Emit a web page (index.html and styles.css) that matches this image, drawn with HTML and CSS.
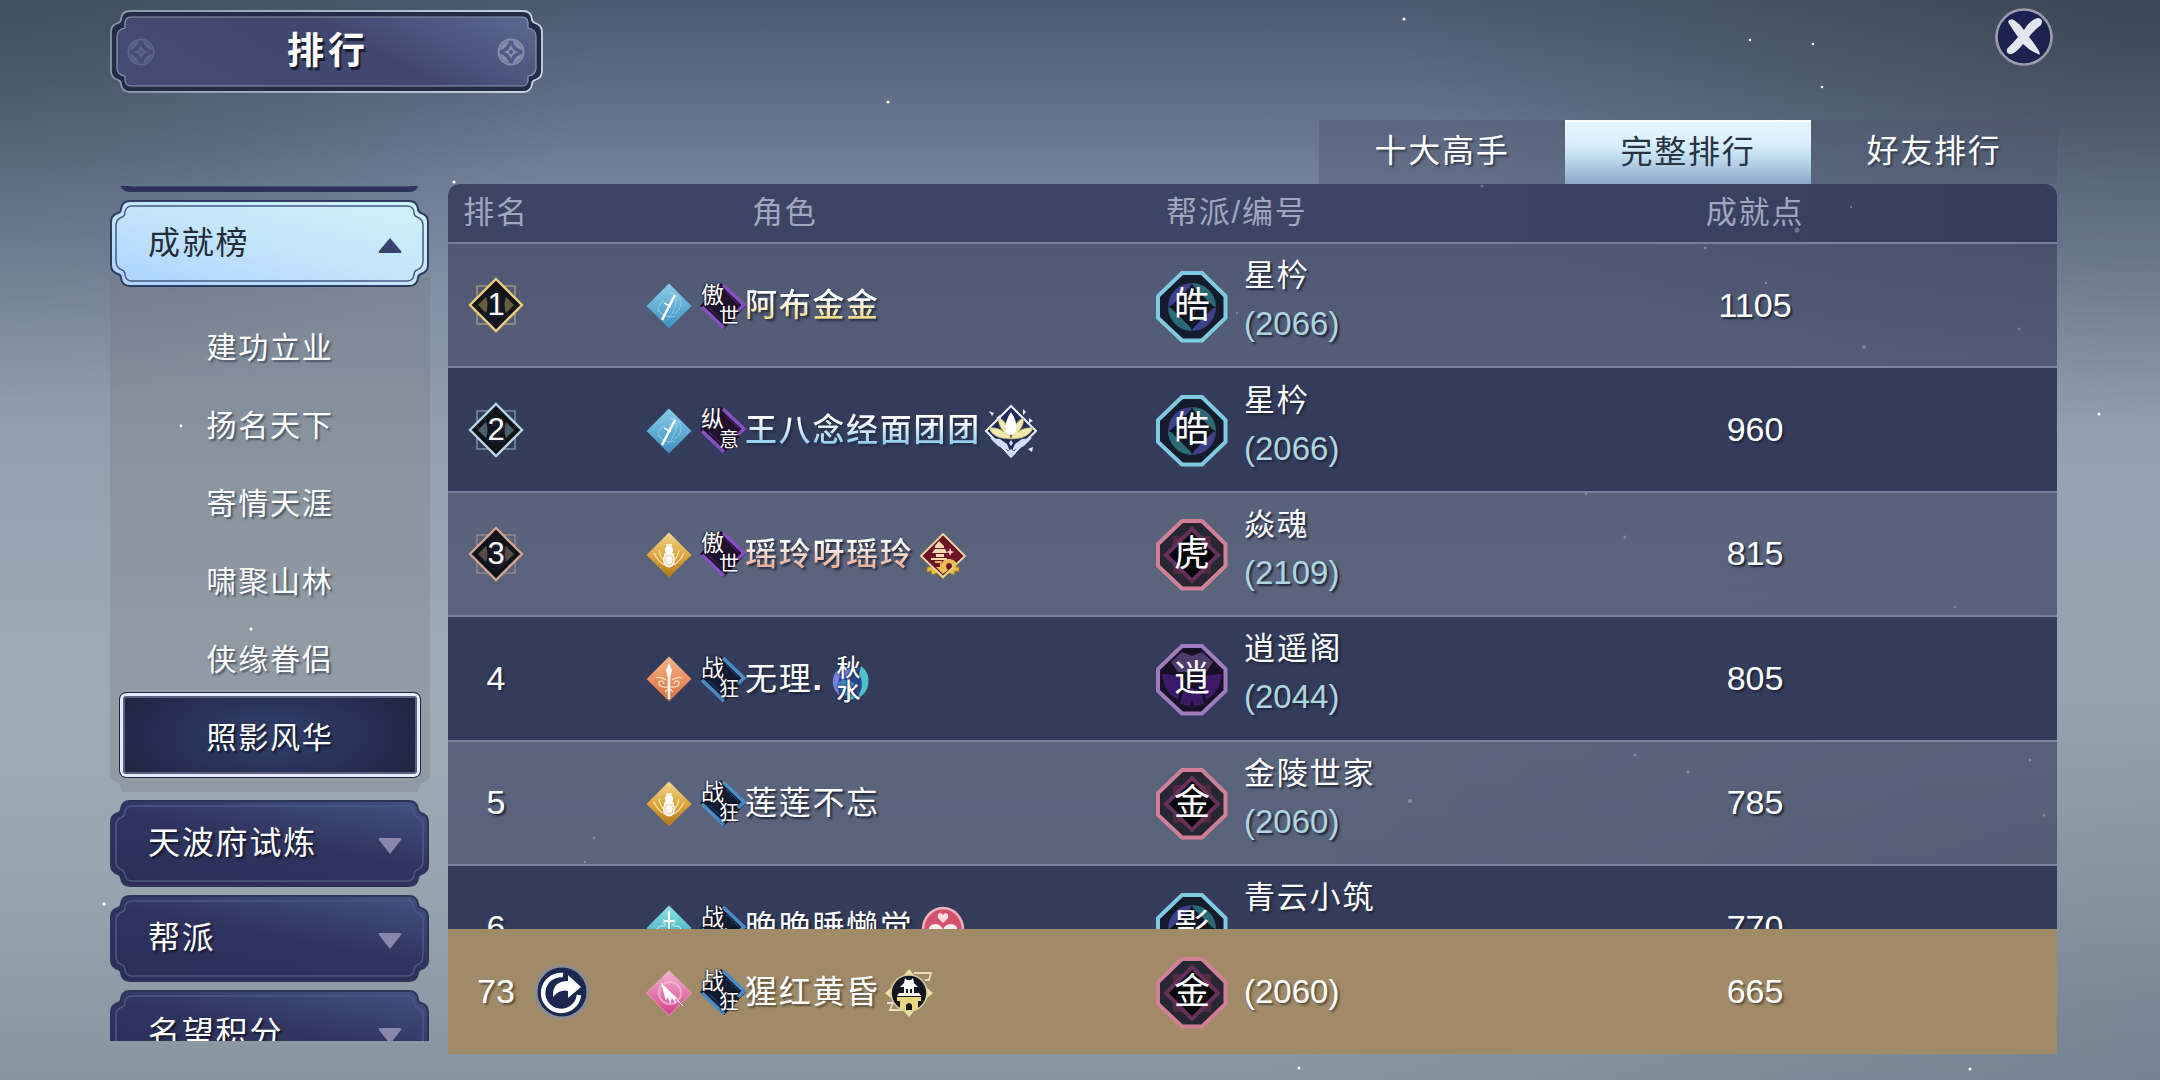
FILE: index.html
```html
<!DOCTYPE html>
<html lang="zh-CN">
<head>
  <meta charset="UTF-8" />
  <meta name="viewport" content="width=device-width, initial-scale=1.0"/>
  <title>排行</title>
  <link rel="stylesheet" href="styles.css">
</head>
<body>

  <!-- 图标定义 -->
  <svg class="defs" width="0" height="0">
    <defs>
      <linearGradient id="g-light" x1="0" y1="1" x2="1" y2="0"><stop offset="0" stop-color="#acd2ff"/><stop offset="0.5" stop-color="#c3e6fb"/><stop offset="1" stop-color="#d0f3f8"/></linearGradient>
      <linearGradient id="g-dark" x1="0.2" y1="1" x2="0.9" y2="0"><stop offset="0" stop-color="#2c2e58"/><stop offset="0.5" stop-color="#2f345e"/><stop offset="1" stop-color="#40507f"/></linearGradient>
      <linearGradient id="g-title" x1="0" y1="0.3" x2="1" y2="0"><stop offset="0" stop-color="#444b73"/><stop offset="0.5" stop-color="#40476f"/><stop offset="1" stop-color="#5b6991"/></linearGradient>
      <linearGradient id="g-rim" x1="0" y1="0" x2="1" y2="0"><stop offset="0" stop-color="#8796aa"/><stop offset="1" stop-color="#c3d5e3"/></linearGradient>
      <linearGradient id="g-blue" x1="0" y1="0" x2="0" y2="1"><stop offset="0" stop-color="#8bcdea"/><stop offset="1" stop-color="#3d8fc0"/></linearGradient>
      <linearGradient id="g-gold" x1="0" y1="0" x2="0" y2="1"><stop offset="0" stop-color="#f3d78e"/><stop offset="0.55" stop-color="#dba23b"/><stop offset="1" stop-color="#b47517"/></linearGradient>
      <linearGradient id="g-orange" x1="0" y1="0" x2="0" y2="1"><stop offset="0" stop-color="#f6b58c"/><stop offset="1" stop-color="#dc6b3d"/></linearGradient>
      <linearGradient id="g-teal" x1="0" y1="0" x2="0" y2="1"><stop offset="0" stop-color="#8ee5ea"/><stop offset="1" stop-color="#2c97ae"/></linearGradient>
      <linearGradient id="g-pink" x1="0" y1="0" x2="0" y2="1"><stop offset="0" stop-color="#f4b3d2"/><stop offset="1" stop-color="#d33f8c"/></linearGradient>
    </defs>

    <symbol id="plate" viewBox="0 0 319 87">
      <path d="M1 22Q1 15 8 13Q11 12 11 9Q12 1 20 1H299Q307 1 308 9Q308 12 311 13Q318 15 318 22V65Q318 72 311 74Q308 75 308 78Q307 86 299 86H20Q12 86 11 78Q11 75 8 74Q1 72 1 65Z" class="plate-bg"/>
      <path d="M6 26Q6 19 12 17Q15 16 15 12Q16 6 22 6H297Q303 6 304 12Q304 16 307 17Q313 19 313 26V61Q313 68 307 70Q304 71 304 75Q303 81 297 81H22Q16 81 15 75Q15 71 12 70Q6 68 6 61Z" class="plate-line"/>
    </symbol>

    <symbol id="coin" viewBox="0 0 28 28">
      <circle cx="14" cy="14" r="12.500" fill="none" stroke="currentColor" stroke-width="2"/>
      <path d="M4 11Q9 9 11 4A11 11 0 0 0 4 11ZM24 11Q19 9 17 4A11 11 0 0 1 24 11ZM4 17Q9 19 11 24A11 11 0 0 1 4 17ZM24 17Q19 19 17 24A11 11 0 0 0 24 17Z" fill="currentColor" stroke="currentColor" stroke-width="1.500"/>
      <path d="M14 6Q15 13 22 14Q15 15 14 22Q13 15 6 14Q13 13 14 6Z" fill="currentColor"/>
      <circle cx="14" cy="14" r="2" fill="#4c5580"/>
    </symbol>

    <symbol id="medal" viewBox="0 0 56 56">
      <rect x="9" y="9" width="38" height="38" fill="none" stroke="currentColor" stroke-opacity="0.6" stroke-width="1.3"/>
      <path d="M28 2L54 28L28 54L2 28Z" fill="#12151c" stroke="currentColor" stroke-width="2.4"/>
      <path d="M10 28L18 20Q21 28 18 36ZM46 28L38 20Q35 28 38 36Z" fill="currentColor" opacity="0.38"/>
      <path d="M28 6L50 28L28 50L6 28Z" fill="none" stroke="#000" stroke-opacity="0.5"/>
    </symbol>

    <!-- 门派 -->
    <symbol id="cls-flute" viewBox="0 0 46 46">
      <path d="M23 .5L45.500 23L23 45.500L.5 23Z" fill="url(#g-blue)"/>
      <path d="M24 10Q34 10 35 20Q35 27 28 31M18 18Q8 24 16 31M30 13Q32 24 22 36M11 27Q20 36 29 33" fill="none" stroke="#b9e4f7" stroke-opacity="0.5"/>
      <path d="M29 12L16 37" stroke="#fff" stroke-width="2.600"/>
      <path d="M18 20L23 22L26 17L24 24Z" fill="#fff" stroke="#fff"/>
    </symbol>
    <symbol id="cls-gourd" viewBox="0 0 46 46">
      <path d="M23 .5L45.500 23L23 45.500L.5 23Z" fill="url(#g-gold)"/>
      <path d="M8 21Q13 31 19 33M38 21Q33 31 27 33M13 18Q14 25 18 28M33 18Q32 25 28 28" fill="none" stroke="#fbe7ae" stroke-width="1.300"/>
      <circle cx="23" cy="18" r="4" fill="#fff"/>
      <ellipse cx="23" cy="28" rx="6" ry="7.500" fill="#fff"/>
      <ellipse cx="23" cy="28" rx="4" ry="5" fill="none" stroke="#d99e38" stroke-width="0.700"/>
      <path d="M18 22h10M20 13h6" stroke="#fff" stroke-width="1.500"/>
    </symbol>
    <symbol id="cls-spear" viewBox="0 0 46 46">
      <path d="M23 .5L45.500 23L23 45.500L.5 23Z" fill="url(#g-orange)"/>
      <path d="M23 7L26 14L24.300 21V43H21.700V21L20 14Z" fill="#fff"/>
      <path d="M22 31Q12 32 13 26Q17 23 18 28M24 31Q34 32 33 26Q29 23 28 28M20 24Q14 20 10 22M26 24Q32 20 36 22M19 36L22 33M27 36L24 33" fill="none" stroke="#ffe2bf" stroke-width="1.200"/>
    </symbol>
    <symbol id="cls-sword" viewBox="0 0 46 46">
      <path d="M23 .5L45.500 23L23 45.500L.5 23Z" fill="url(#g-teal)"/>
      <path d="M23 6V40M18 16H28" stroke="#fff" stroke-width="2"/>
      <path d="M19 21Q9 20 12 27M27 21Q37 20 34 27M18 14Q15 18 20 20M28 14Q31 18 26 20" fill="none" stroke="#c9f5f7"/>
    </symbol>
    <symbol id="cls-fan" viewBox="0 0 46 46">
      <path d="M23 .5L45.500 23L23 45.500L.5 23Z" fill="url(#g-pink)" stroke="#f2a4cb" stroke-width="0.800"/>
      <circle cx="24" cy="23" r="11" fill="none" stroke="#f7bfdc" stroke-opacity="0.700" stroke-width="2"/>
      <path d="M15 13L20 31L22 27L24 34L26 28L30 34L29 28L32 29Z" fill="#fff"/>
      <path d="M15 13L37 36" stroke="#fff"/>
    </symbol>

    <symbol id="tag" viewBox="0 0 46 46">
      <path d="M21 0L46 23L24 46L0 23Z" fill="var(--tag-bg)"/>
      <path d="M23 2L44 22L38 28M2 24L24 45" fill="none" stroke="var(--tag-line)" stroke-width="3.600"/>
      <path d="M26 9L38 21M9 25L24 39" stroke="var(--tag-line)" stroke-opacity="0.4"/>
    </symbol>

    <!-- 帮派徽记 -->
    <symbol id="guild-a" viewBox="0 0 72 72">
      <path d="M26 2H46L69.500 25V47L46 69.500H26L2 47V25Z" fill="#141b2a" stroke="#7ecbe0" stroke-width="4"/>
      <circle cx="36" cy="36" r="24" fill="#11192a"/>
      <path d="M12 36A24 24 0 0 1 36 12Q30 29 12 36Z M60 36A24 24 0 0 1 36 60Q42 43 60 36Z" fill="#3d418b"/>
      <path d="M36 12A24 24 0 0 1 60 36Q43 30 36 12Z M36 60A24 24 0 0 1 12 36Q29 42 36 60Z" fill="#2b6a74"/>
      <path d="M36 14L58 36L36 58L14 36Z" fill="#111522"/>
    </symbol>
    <symbol id="guild-b" viewBox="0 0 72 72">
      <path d="M26 2H46L69.500 25V47L46 69.500H26L2 47V25Z" fill="#272633" stroke="#d17f96" stroke-width="4"/>
      <rect x="17" y="17" width="38" height="38" fill="#4e2940"/>
      <path d="M36 10L62 36L36 62L10 36Z" fill="#08070c" stroke="#67305b" stroke-width="4"/>
    </symbol>
    <symbol id="guild-c" viewBox="0 0 72 72">
      <path d="M26 2H46L69.500 25V47L46 69.500H26L2 47V25Z" fill="#181026" stroke="#a07bbd" stroke-width="4"/>
      <path d="M26 8L36 12L46 8L57 18L50 28H22L15 18Z" fill="#4f3b6b"/>
      <path d="M6 30L26 32L22 56L14 50Q8 44 6 30ZM66 30L46 32L50 56L58 50Q64 44 66 30ZM27 48L36 44L45 48L48 60L38 62L36 56L34 62L24 60Z" fill="#3d1a67"/>
    </symbol>

    <!-- 称号徽章 -->
    <symbol id="badge-lotus" viewBox="0 0 56 56">
      <path d="M28 3L53 28L28 53L3 28Z" fill="#1e2a58" stroke="#f4f6ff" stroke-width="2"/>
      <path d="M28 36Q10 36 6 25Q15 24 21 29Q14 21 16 15Q23 18 25 26L28 36L31 26Q33 18 40 15Q42 21 35 29Q41 24 50 25Q46 36 28 36Z" fill="#f1e9ad" stroke="#b8a95b" stroke-width="0.700"/>
      <path d="M28 9Q36 21 32 30Q28 34 24 30Q20 21 28 9Z" fill="#fff"/>
      <path d="M7 35L17 36L24 41L15 43ZM49 35L39 36L32 41L41 43ZM15 43L24 41L27 48ZM41 43L32 41L29 48ZM28 37L30 40L28 43L26 40ZM28 46L33 50L28 55L23 50Z" fill="#cfdcfb"/>
      <path d="M6 8L11 10L9 13ZM13 15L17 12L18 16ZM40 6L43 9L40 12ZM46 15L50 18L46 20ZM45 46L50 44L49 49Z" fill="#e8efff"/>
    </symbol>
    <symbol id="badge-palace" viewBox="0 0 48 48">
      <path d="M8 35H40V40L36 39L35 43L30 41L24 47L18 41L13 43L12 39L8 40Z" fill="#e5ba3f" stroke="#a5781c" stroke-width="0.800"/>
      <path d="M24 2L46 24L24 45L2 24Z" fill="#6e1428" stroke="#f0d7a0" stroke-width="1.800"/>
      <path d="M20 9L25 14V16H16V14ZM16 17H26L28 21H13ZM17 22H25V25H17ZM12 26H28V28H12Z" fill="#f3dcae"/>
      <path d="M22 33Q24 26 31 27Q39 28 37 35H33Q33 31 30 31Q27 31 27 35L29 38L24 42L17 35H21V31H16V29H23Z" fill="#e8bd55"/>
      <path d="M31 16l1.500 3 3 1-3 1-1.500 3-1-3-3-1 3-1Z" fill="#f7c6c3"/>
    </symbol>
    <symbol id="badge-water" viewBox="0 0 40 48">
      <circle cx="20" cy="25" r="16" fill="#28488b"/>
      <path d="M6 14A18 18 0 0 0 9 40Q4 26 12 16ZM8 20Q16 10 26 14Q17 15 12 26Z" fill="#7481dc"/>
      <path d="M30 10A19 19 0 0 1 25 43Q35 30 28 19ZM12 34Q20 28 25 42L19 44Z" fill="#4cc3cc"/>
      <path d="M5 28Q15 20 24 28L14 40Z" fill="#3c86bd"/>
    </symbol>
    <symbol id="badge-heart" viewBox="0 0 44 48">
      <ellipse cx="22" cy="24" rx="20" ry="22" fill="#d3536f" stroke="#f1aebb" stroke-width="2.500"/>
      <path d="M22 17L17 12Q16 8 19 7Q21 7 22 9Q23 7 25 7Q28 8 27 12Z" fill="#ffdce0"/>
      <path d="M22 42L8 28Q6 19 14 18Q20 18 22 24Q24 18 30 18Q38 19 36 28Z" fill="#fff0ee"/>
    </symbol>
    <symbol id="badge-tower" viewBox="0 0 50 50">
      <path d="M25 1L30 7H20ZM25 49L20 43H30ZM1 25L7 20V30ZM49 25L43 20V30Z" fill="#efe2a6"/>
      <path d="M30 5H47L45 12H41M3 35H9L6 42H22" fill="none" stroke="#e8dfb8" stroke-width="1.800"/>
      <circle cx="25" cy="25" r="18" fill="#11161f" stroke="#d5cda2" stroke-width="1.600"/>
      <path d="M21 10L23 12H27L29 10L30 15L34 19H16L20 15ZM20 19H30V25H35L37 28H13L15 25H20Z" fill="#fff"/>
      <path d="M13 29H37V33H34V41Q25 45 16 41V33H13Z" fill="#ead67f"/>
      <path d="M22 42V37Q25 33 28 37V42ZM22 21h2v4h-2ZM26 21h2v4h-2Z" fill="#11161f"/>
    </symbol>
  </svg>

  <!-- 顶部 -->
  <header>
    <div class="title">
      <svg class="title-bg" viewBox="0 0 433 83">
        <path d="M1 22Q1 15 8 13Q11 12 11 9Q12 1 20 1H413Q421 1 422 9Q422 12 425 13Q432 15 432 22V61Q432 68 425 70Q422 71 422 74Q421 82 413 82H20Q12 82 11 74Q11 71 8 70Q1 68 1 61Z" fill="#232c45" stroke="url(#g-rim)" stroke-width="1.800"/>
        <path d="M7 27Q7 19 15 18V12Q16 7 21 7H412Q417 7 418 12V18Q426 19 426 27V58Q426 65 418 66V71Q417 76 412 76H21Q16 76 15 71V66Q7 65 7 58Z" fill="url(#g-title)" stroke="#8a98b5" stroke-width="1.200"/>
      </svg>
      <svg class="coin"><use href="#coin"/></svg>
      <h1>排行</h1>
      <svg class="coin bright"><use href="#coin"/></svg>
    </div>
    <button class="close" aria-label="关闭">
      <svg viewBox="0 0 58 58">
        <circle cx="29" cy="29" r="27.500" fill="#1c2150" stroke="#9b9cab" stroke-width="2.600"/>
        <path d="M13 14Q14 10 19 12Q25 16 29 22Q35 12 43 10Q49 11 46 17Q39 22 34 29Q40 36 44 43Q46 48 43 46Q35 43 28 36Q23 43 17 46Q11 47 12 41Q18 35 23 29Q18 22 13 14Z" fill="#e3e6ee"/>
      </svg>
    </button>
  </header>

  <main>
    <!-- 左侧菜单 -->
    <nav class="side">
      <div class="side-btn"><svg class="plate"><use href="#plate"/></svg></div>
      <div class="side-group">
        <div class="side-btn active"><svg class="plate"><use href="#plate"/></svg><span>成就榜</span><svg class="arrow" viewBox="0 0 24 17"><path d="M12 1L23 14Q24 16 22 16H2Q0 16 1 14Z"/></svg></div>
        <ul class="sub-list">
          <li>建功立业</li>
          <li>扬名天下</li>
          <li>寄情天涯</li>
          <li>啸聚山林</li>
          <li>侠缘眷侣</li>
          <li class="selected">照影风华</li>
        </ul>
      </div>
      <div class="side-btn"><svg class="plate"><use href="#plate"/></svg><span>天波府试炼</span><svg class="arrow" viewBox="0 0 24 17"><path d="M12 17L23 3Q24 1 22 1H2Q0 1 1 3Z"/></svg></div>
      <div class="side-btn"><svg class="plate"><use href="#plate"/></svg><span>帮派</span><svg class="arrow" viewBox="0 0 24 17"><path d="M12 17L23 3Q24 1 22 1H2Q0 1 1 3Z"/></svg></div>
      <div class="side-btn"><svg class="plate"><use href="#plate"/></svg><span>名望积分</span><svg class="arrow" viewBox="0 0 24 17"><path d="M12 17L23 3Q24 1 22 1H2Q0 1 1 3Z"/></svg></div>
    </nav>

    <section class="content">
      <div class="tabs">
        <div class="tab">十大高手</div>
        <div class="tab active">完整排行</div>
        <div class="tab">好友排行</div>
      </div>

      <!-- 排行表 -->
      <div class="board">
        <div class="row head">
          <div class="rank"><span>排名</span></div>
          <div class="role">角色</div>
          <div class="guild">帮派/编号</div>
          <div class="score">成就点</div>
        </div>

        <div class="rows">
          <div class="row">
            <div class="rank"><span class="medal gold"><svg><use href="#medal"/></svg><b>1</b></span></div>
            <div class="role">
              <svg class="cls"><use href="#cls-flute"/></svg>
              <span class="tag purple"><svg><use href="#tag"/></svg><i>傲</i><i>世</i></span>
              <span class="name n-gold">阿布金金</span>
            </div>
            <div class="guild">
              <span class="crest"><svg><use href="#guild-a"/></svg><b>皓</b></span>
              <div class="guild-info"><p>星枔</p><p class="num">(2066)</p></div>
            </div>
            <div class="score">1105</div>
          </div>

          <div class="row even">
            <div class="rank"><span class="medal silver"><svg><use href="#medal"/></svg><b>2</b></span></div>
            <div class="role">
              <svg class="cls"><use href="#cls-flute"/></svg>
              <span class="tag purple"><svg><use href="#tag"/></svg><i>纵</i><i>意</i></span>
              <span class="name n-silver">王八念经面团团</span>
              <svg class="badge lotus"><use href="#badge-lotus"/></svg>
            </div>
            <div class="guild">
              <span class="crest"><svg><use href="#guild-a"/></svg><b>皓</b></span>
              <div class="guild-info"><p>星枔</p><p class="num">(2066)</p></div>
            </div>
            <div class="score">960</div>
          </div>

          <div class="row">
            <div class="rank"><span class="medal bronze"><svg><use href="#medal"/></svg><b>3</b></span></div>
            <div class="role">
              <svg class="cls"><use href="#cls-gourd"/></svg>
              <span class="tag purple"><svg><use href="#tag"/></svg><i>傲</i><i>世</i></span>
              <span class="name n-bronze">瑶玲呀瑶玲</span>
              <svg class="badge palace"><use href="#badge-palace"/></svg>
            </div>
            <div class="guild">
              <span class="crest"><svg><use href="#guild-b"/></svg><b>虎</b></span>
              <div class="guild-info"><p>焱魂</p><p class="num">(2109)</p></div>
            </div>
            <div class="score">815</div>
          </div>

          <div class="row even">
            <div class="rank"><span>4</span></div>
            <div class="role">
              <svg class="cls"><use href="#cls-spear"/></svg>
              <span class="tag blue"><svg><use href="#tag"/></svg><i>战</i><i>狂</i></span>
              <span class="name">无理<b class="dot">.</b></span>
              <span class="badge water"><svg><use href="#badge-water"/></svg><i>秋</i><i>水</i></span>
            </div>
            <div class="guild">
              <span class="crest"><svg><use href="#guild-c"/></svg><b>逍</b></span>
              <div class="guild-info"><p>逍遥阁</p><p class="num">(2044)</p></div>
            </div>
            <div class="score">805</div>
          </div>

          <div class="row">
            <div class="rank"><span>5</span></div>
            <div class="role">
              <svg class="cls"><use href="#cls-gourd"/></svg>
              <span class="tag blue"><svg><use href="#tag"/></svg><i>战</i><i>狂</i></span>
              <span class="name">莲莲不忘</span>
            </div>
            <div class="guild">
              <span class="crest"><svg><use href="#guild-b"/></svg><b>金</b></span>
              <div class="guild-info"><p>金陵世家</p><p class="num">(2060)</p></div>
            </div>
            <div class="score">785</div>
          </div>

          <div class="row even">
            <div class="rank"><span>6</span></div>
            <div class="role">
              <svg class="cls"><use href="#cls-sword"/></svg>
              <span class="tag blue"><svg><use href="#tag"/></svg><i>战</i><i>狂</i></span>
              <span class="name">晚晚睡懒觉</span>
              <svg class="badge heart"><use href="#badge-heart"/></svg>
            </div>
            <div class="guild">
              <span class="crest"><svg><use href="#guild-a"/></svg><b>影</b></span>
              <div class="guild-info"><p>青云小筑</p><p class="num">&nbsp;</p></div>
            </div>
            <div class="score">770</div>
          </div>
        </div>

        <!-- 自己的排名 -->
        <div class="row mine">
          <div class="rank">
            <span>73</span>
            <svg class="share" viewBox="0 0 56 56">
              <circle cx="28" cy="28" r="26" fill="#1c2851" stroke="#8a8c91" stroke-width="3"/>
              <path d="M29 11A18 18 0 1 0 45 31" fill="none" stroke="#fff" stroke-width="4.500"/>
              <path d="M19 33Q18 17 34 17V11L47 23L34 34V27Q26 25 19 33Z" fill="#fff"/>
            </svg>
          </div>
          <div class="role">
            <svg class="cls"><use href="#cls-fan"/></svg>
            <span class="tag blue"><svg><use href="#tag"/></svg><i>战</i><i>狂</i></span>
            <span class="name">猩红黄昏</span>
            <svg class="badge tower"><use href="#badge-tower"/></svg>
          </div>
          <div class="guild">
            <span class="crest"><svg><use href="#guild-b"/></svg><b>金</b></span>
            <div class="guild-info"><p class="num">(2060)</p></div>
          </div>
          <div class="score">665</div>
        </div>
      </div>
    </section>
  </main>

  <!-- 飘雪 -->
  <svg class="snow" viewBox="0 0 2160 1080">
    <g fill="#fff">
      <circle cx="888" cy="102" r="1.500"/><circle cx="1404" cy="19" r="1.500"/><circle cx="1750" cy="40" r="1.300"/><circle cx="1813" cy="44" r="1.300"/>
      <circle cx="1822" cy="87" r="1.300"/><circle cx="2099" cy="414" r="1.600"/><circle cx="1299" cy="1068" r="1.500"/><circle cx="1970" cy="1069" r="1.500"/>
      <circle cx="104" cy="904" r="1.700"/><circle cx="454" cy="182" r="1.600"/><circle cx="181" cy="426" r="1.400"/><circle cx="251" cy="629" r="1.500"/>
    </g>
    <g fill="#c3cbe0" opacity="0.4">
      <circle cx="1705" cy="248" r="1.500"/><circle cx="1766" cy="283" r="1.300"/><circle cx="1864" cy="347" r="2"/><circle cx="2019" cy="329" r="1.500"/>
      <circle cx="1625" cy="537" r="1.500"/><circle cx="1955" cy="607" r="1.300"/><circle cx="1635" cy="755" r="1.500"/><circle cx="1688" cy="772" r="1.800"/>
      <circle cx="2030" cy="760" r="1.500"/><circle cx="2044" cy="815" r="1.500"/><circle cx="1797" cy="230" r="2.500"/><circle cx="1482" cy="186" r="1.500"/>
      <circle cx="1851" cy="207" r="1.200"/><circle cx="594" cy="838" r="1.500"/><circle cx="585" cy="862" r="1.200"/><circle cx="1410" cy="801" r="2"/>
      <circle cx="1237" cy="313" r="1.200"/><circle cx="1586" cy="494" r="1.200"/>
    </g>
  </svg>

</body>
</html>
```
FILE: styles.css
```css
* {
  box-sizing: border-box;
}

body {
  margin: 0;
  width: 2160px;
  height: 1080px;
  overflow: hidden;
  position: relative;
  font-family: "Liberation Sans", "Noto Sans CJK SC", sans-serif;
  color: #fff;
  background:
    radial-gradient(ellipse 760px 420px at 100% 0, rgba(48, 60, 70, 0.65), rgba(48, 60, 70, 0)),
    radial-gradient(ellipse 600px 400px at 0 0, rgba(56, 72, 82, 0.6), rgba(56, 72, 82, 0)),
    radial-gradient(ellipse 900px 600px at 100% 100%, rgba(90, 104, 120, 0.4), rgba(90, 104, 120, 0)),
    linear-gradient(#4b5a70 0, #5e6d85 90px, #72829a 184px, #8593a7 320px, #95a3b1 480px, #9eacb7 700px, #98a6b0 860px, #8795a1 1080px);
}

h1, p, ul {
  margin: 0;
  padding: 0;
}

i {
  font-style: normal;
}

.defs,
.snow {
  position: absolute;
  left: 0;
  top: 0;
  pointer-events: none;
}

.snow {
  width: 2160px;
  height: 1080px;
}

header {
  height: 120px;
  padding: 10px 107px 0 110px;
  display: flex;
  justify-content: space-between;
  align-items: flex-start;
}

.title {
  position: relative;
  width: 433px;
  height: 83px;
  padding: 0 18px 0 17px;
  display: flex;
  align-items: center;
  justify-content: space-between;
}

.title-bg {
  position: absolute;
  left: 0;
  top: 0;
  width: 433px;
  height: 83px;
}

.title h1 {
  position: relative;
  font-size: 37px;
  line-height: 80px;
  letter-spacing: 4px;
  padding-left: 4px;
  font-weight: bold;
  text-shadow: 2px 3px 1px #191d30;
}

.coin {
  position: relative;
  width: 28px;
  height: 28px;
  color: #5b648c;
}

.coin.bright {
  color: #8490ae;
}

.close {
  width: 58px;
  height: 58px;
  margin-top: -2px;
  padding: 0;
  border: none;
  background: none;
}

.close svg {
  display: block;
}

main {
  display: flex;
  padding-left: 110px;
}

/* 左侧菜单 */
.side {
  width: 320px;
  height: 855px;
  margin-top: 66px;
  margin-right: 18px;
  overflow: hidden;
  display: flex;
  flex-direction: column;
  gap: 8px;
}

.side-btn {
  position: relative;
  width: 319px;
  height: 87px;
  flex: none;
  display: flex;
  align-items: center;
  justify-content: space-between;
  padding: 0 27px 2px 38px;
  font-size: 32px;
  letter-spacing: 1.8px;
  text-shadow: 2px 2px 2px #15182c;
}

.side > .side-btn:first-child {
  margin-top: -81px;
}

.side-btn span {
  position: relative;
  margin-bottom: 5px;
}

.plate {
  position: absolute;
  left: 0;
  top: 0;
  width: 319px;
  height: 87px;
  fill: url(#g-dark);
  stroke: #2c3559;
}

.plate-line {
  fill: none;
  stroke: #4b5885;
  stroke-width: 1.5;
}

.plate-bg {
  stroke-width: 2;
}

.active .plate {
  fill: url(#g-light);
  stroke: #303b62;
}

.side-btn.active {
  color: #252c38;
  text-shadow: none;
}

.arrow {
  position: relative;
  width: 24px;
  height: 17px;
  margin-top: 5px;
  fill: #8987ab;
}

.active .arrow {
  fill: #3a4270;
}

.side-group {
  flex: none;
}

.sub-list {
  list-style: none;
  width: 320px;
  margin-top: -10px;
  padding: 31px 9px 14px;
  background: rgba(112, 116, 118, 0.28);
  clip-path: polygon(0 0, 100% 0, 100% calc(100% - 14px), 310px calc(100% - 8px), 308px 100%, 12px 100%, 10px calc(100% - 8px), 0 calc(100% - 14px));
}

.side-group .side-btn {
  z-index: 1;
}

.sub-list li {
  height: 78px;
  line-height: 80px;
  text-align: center;
  font-size: 30px;
  letter-spacing: 1.8px;
  text-shadow: 2px 2px 2px #4c5564;
}

.sub-list .selected {
  height: 86px;
  margin-top: -6px;
  line-height: 89px;
  border: 1px solid #1c2541;
  border-radius: 7px;
  background: radial-gradient(ellipse 55% 90% at center, #30406b, #212444);
  box-shadow: inset 0 0 0 3px #e6ecff, inset 0 0 0 5px #59617f;
  text-shadow: 2px 2px 2px #10142a;
}

/* 标签页 */
.tabs {
  display: flex;
  justify-content: flex-end;
}

.tab {
  width: 246px;
  height: 64px;
  line-height: 63px;
  text-align: center;
  font-size: 32px;
  letter-spacing: 1.8px;
  background: rgba(78, 86, 110, 0.4);
  text-shadow: 2px 2px 2px #343c50;
}

.tab.active {
  color: #2a3342;
  background: linear-gradient(#e3f6ff, #d9f0fc 35%, #c2dff0 55%, #8fa8cb);
  border-top: 2px solid #fff;
  line-height: 60px;
  text-shadow: none;
}

/* 排行表 */
.board {
  width: 1609px;
}

.row {
  display: grid;
  grid-template-columns: 198px 510px 297px 604px;
  align-items: center;
  height: 124.4px;
  border-bottom: 2px solid #77829c;
  background: rgba(58, 65, 96, 0.67);
  font-size: 34px;
  text-shadow: 2px 2px 2px #20253a;
}

.row.even {
  background: #343c5c;
}

.row.head {
  height: 60px;
  padding-bottom: 7px;
  border-radius: 12px 12px 0 0;
  background: linear-gradient(90deg, #3b4463, #3c4565 60%, #353e5c);
  color: #a0a6bd;
  font-size: 31px;
  letter-spacing: 1.8px;
  text-shadow: none;
}

.head .role {
  padding-left: 106px;
}

.head .guild {
  padding-left: 10px;
}

.rows {
  height: 685px;
  overflow: hidden;
}

.rank,
.role,
.guild {
  display: flex;
  align-items: center;
}

.rank > span {
  width: 96px;
  text-align: center;
}

.rank .medal {
  position: relative;
  width: 56px;
  height: 56px;
  margin-left: 20px;
}

.medal svg {
  position: absolute;
  left: 0;
  top: 0;
  width: 56px;
  height: 56px;
}

.medal b {
  position: relative;
  font-size: 31px;
  font-weight: normal;
  line-height: 55px;
}

.gold {
  color: #f0cd7c;
}

.silver {
  color: #b4d7e8;
}

.bronze {
  color: #d3a293;
}

.medal b,
.tag i,
.crest b {
  color: #fff;
}

.cls {
  width: 46px;
  height: 46px;
  margin: 2px 8px 0 0;
}

.tag {
  position: relative;
  width: 46px;
  height: 46px;
  margin-top: 1px;
}

.tag.purple {
  --tag-bg: #22112f;
  --tag-line: #8750c0;
}

.tag.blue {
  --tag-bg: #111b31;
  --tag-line: #4a8cc6;
}

.tag svg,
.crest svg,
.water svg {
  position: absolute;
  left: 0;
  top: 0;
  width: 100%;
  height: 100%;
}

.tag i {
  position: absolute;
  left: 1px;
  top: -1px;
  font-size: 23px;
  line-height: 26px;
  text-shadow: 0 0 2px #120c1c, 0 0 2px #120c1c;
}

.tag i + i {
  left: 19px;
  top: 22px;
  font-size: 20px;
  line-height: 23px;
}

.name {
  margin-left: -1px;
  font-size: 32px;
  line-height: 48px;
  letter-spacing: 1.7px;
}

.n-gold,
.n-silver,
.n-bronze {
  color: transparent;
  -webkit-background-clip: text;
  background-clip: text;
  text-shadow: none;
  font-weight: 500;
  filter: drop-shadow(2px 2px 1px #252b40);
}

.n-gold {
  background-image: linear-gradient(#fff 35%, #f0dc8c 75%);
}

.n-silver {
  background-image: linear-gradient(#fff 30%, #8ccdf0 80%);
}

.n-bronze {
  background-image: linear-gradient(#fff 25%, #e8b09a 75%);
}

.dot {
  font-size: 34px;
}

.badge {
  position: relative;
  flex: none;
}

.lotus {
  width: 56px;
  height: 56px;
  margin: 3px 0 0 2px;
}

.palace {
  width: 48px;
  height: 48px;
  margin: 4px 0 0 5px;
}

.water {
  width: 40px;
  height: 48px;
  margin: 3px 0 0 7px;
}

.water i {
  position: absolute;
  left: 6px;
  top: -1px;
  font-size: 24px;
  line-height: 25px;
  font-weight: 500;
  text-shadow: 0 0 2px #0b1a35, 0 0 2px #0b1a35;
}

.water i + i {
  top: 23px;
}

.heart {
  width: 44px;
  height: 48px;
  margin: 5px 0 0 7px;
}

.tower {
  width: 50px;
  height: 50px;
  margin: 2px 0 0 4px;
}

.crest {
  position: relative;
  width: 72px;
  height: 72px;
  margin-top: 3px;
  line-height: 70px;
  text-align: center;
}

.crest b {
  position: relative;
  font-size: 36px;
  font-weight: normal;
  text-shadow: none;
}

.guild-info {
  margin-left: 16px;
  padding-bottom: 10px;
}

.guild-info p {
  font-size: 31px;
  line-height: 48px;
  letter-spacing: 1.8px;
}

.guild-info .num {
  font-size: 33px;
  letter-spacing: 0;
  color: #add6df;
}

.score {
  text-align: center;
}

.row.mine {
  height: 125px;
  border: none;
  background: #a08a67;
  text-shadow: 2px 2px 2px #5d513e;
}

.mine .guild-info {
  padding-bottom: 0;
}

.mine .guild-info .num {
  color: #fff;
}

.share {
  width: 56px;
  height: 56px;
  margin-left: -10px;
}
```
